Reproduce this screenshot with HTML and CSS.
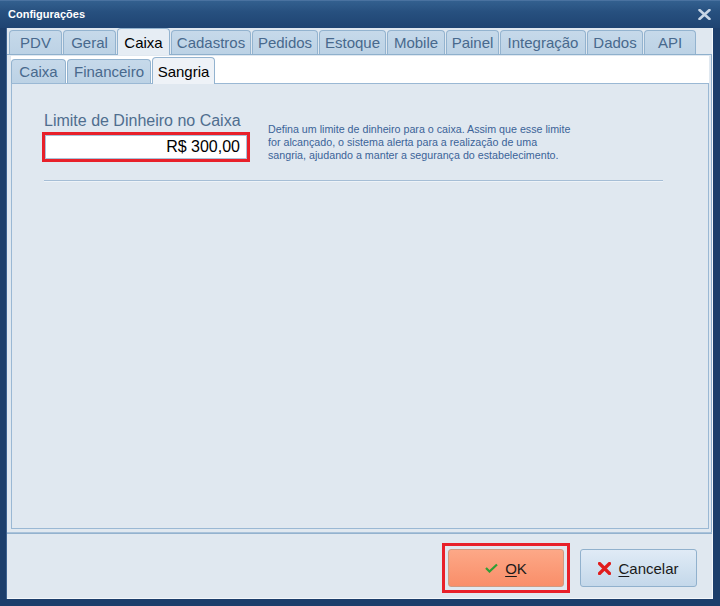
FILE: index.html
```html
<!DOCTYPE html>
<html lang="pt-BR">
<head>
<meta charset="utf-8">
<title>Configurações</title>
<link rel="stylesheet" href="styles.css">
</head>
<body>
<div class="window">
  <div class="titlebar">
    <span class="title">Configurações</span>
    <svg class="close" width="13" height="11" viewBox="0 0 13 11"><path d="M1.5 1 L11.5 10 M11.5 1 L1.5 10" stroke="#c8d6e6" stroke-width="2.6" stroke-linecap="round"/></svg>
  </div>
  <div class="client">
    <div class="tabstrip main">
      <div class="tab">PDV</div>
      <div class="tab">Geral</div>
      <div class="tab active">Caixa</div>
      <div class="tab">Cadastros</div>
      <div class="tab">Pedidos</div>
      <div class="tab">Estoque</div>
      <div class="tab">Mobile</div>
      <div class="tab">Painel</div>
      <div class="tab">Integração</div>
      <div class="tab">Dados</div>
      <div class="tab">API</div>
    </div>
    <div class="pane">
      <div class="tabstrip sub">
        <div class="tab">Caixa</div>
        <div class="tab">Financeiro</div>
        <div class="tab active">Sangria</div>
      </div>
      <div class="subpane">
        <div class="setting">
          <div class="field">
            <div class="label">Limite de Dinheiro no Caixa</div>
            <div class="input">R$ 300,00</div>
          </div>
          <p class="desc">Defina um limite de dinheiro para o caixa. Assim que esse limite<br>for alcançado, o sistema alerta para a realização de uma<br>sangria, ajudando a manter a segurança do estabelecimento.</p>
        </div>
        <div class="sep"></div>
      </div>
    </div>
    <div class="footer">
      <div class="focus-ring">
        <button class="btn ok" type="button">
          <svg class="ico" width="13" height="10" viewBox="0 0 13 10"><path d="M1 5 L4.5 8.5 L12 1.5" fill="none" stroke="#2f9e35" stroke-width="2.2"/></svg>
          <span><u>O</u>K</span>
        </button>
      </div>
      <button class="btn cancel" type="button">
        <svg class="ico" width="13" height="13" viewBox="0 0 13 13"><path d="M1.5 1.5 L11.5 11.5 M11.5 1.5 L1.5 11.5" stroke="#e01c1c" stroke-width="3.2" stroke-linecap="round"/></svg>
        <span><u>C</u>ancelar</span>
      </button>
    </div>
  </div>
</div>
</body>
</html>
```

FILE: styles.css
```css
* { box-sizing: border-box; }
html, body { margin: 0; padding: 0; }
body {
  width: 720px;
  height: 606px;
  overflow: hidden;
  font-family: "Liberation Sans", Arial, sans-serif;
}
.window {
  width: 720px;
  height: 606px;
  background: #1c3e6b;
  display: flex;
  flex-direction: column;
}
.titlebar {
  height: 28px;
  flex: none;
  display: flex;
  align-items: center;
  justify-content: space-between;
  padding: 0 9px 1px 8px;
  background: linear-gradient(#33608f, #27507f 40%, #1f4472);
  border-top: 1px solid #4a72a0;
}
.title {
  color: #ffffff;
  font-weight: bold;
  font-size: 11px;
}
.close { display: block; margin-top: 1px; }
.client {
  flex: 1;
  margin: 0 7px 7px 7px;
  background: #e0e8f0;
  border-right: 1px solid #f4f7fa;
  border-bottom: 1px solid #f4f7fa;
  box-shadow: -1px 0 0 #3d6290;
  display: flex;
  flex-direction: column;
}
.tabstrip {
  display: flex;
  align-items: flex-end;
  flex: none;
}
.tabstrip.main {
  height: 26px;
  padding-left: 2px;
}
.tab {
  height: 24px;
  padding: 0 4px;
  margin-right: 1px;
  display: flex;
  align-items: center;
  justify-content: center;
  font-size: 15px;
  color: #48698d;
  background: linear-gradient(#c6d9ea, #bcd2e5);
  border: 1px solid #93b3cf;
  border-bottom: none;
  border-radius: 4px 4px 0 0;
  white-space: nowrap;
}
.main .tab:nth-child(1),
.main .tab:nth-child(2),
.main .tab:nth-child(3),
.main .tab:nth-child(8) { width: 53px; }
.main .tab:nth-child(4) { width: 80px; }
.main .tab:nth-child(5) { width: 66px; }
.main .tab:nth-child(6) { width: 67px; }
.main .tab:nth-child(7) { width: 58px; }
.main .tab:nth-child(9) { width: 86px; }
.main .tab:nth-child(10) { width: 56px; }
.main .tab:nth-child(11) { width: 52px; }
.tab.active {
  color: #000000;
  background: #e6edf4;
  position: relative;
  margin-bottom: -1px;
  height: 27px;
  z-index: 1;
}
.pane {
  height: 479px;
  flex: none;
  border-top: 1px solid #8fb0cc;
  border-right: 1px solid #8fb0cc;
  border-bottom: 1px solid #a9c2da;
  padding: 1px 2px 3px 4px;
  display: flex;
  flex-direction: column;
}
.tabstrip.sub {
  height: 27px;
  background: #ffffff;
}
.sub .tab:nth-child(1) { width: 55px; }
.sub .tab:nth-child(2) { width: 84px; }
.sub .tab:nth-child(3) { width: 63px; }
.tabstrip.sub .tab.active {
  background: #eef2f7;
  height: 27px;
}
.subpane {
  flex: 1;
  background: #e0e8f0;
  border: 1px solid #9ab8d4;
  padding: 28px 0 0 32px;
}
.setting {
  display: flex;
  align-items: flex-start;
}
.field { width: 203px; flex: none; }
.label {
  font-size: 16px;
  line-height: 18px;
  color: #4f6e8f;
  white-space: nowrap;
}
.input {
  margin: 5px 0 0 1px;
  width: 202px;
  height: 24px;
  background: #ffffff;
  border: 1px solid #a9c2da;
  outline: 3px solid #e8202a;
  font-size: 16px;
  line-height: 22px;
  color: #000000;
  text-align: right;
  padding-right: 6px;
}
.desc {
  margin: 11px 0 0 21px;
  font-size: 10.7px;
  line-height: 13px;
  color: #3b6398;
  white-space: nowrap;
}
.sep {
  margin-top: 18px;
  width: 619px;
  height: 2px;
  border-top: 1px solid #a6bed6;
  border-bottom: 1px solid #eef3f8;
}
.footer {
  flex: 1;
  border-top: 1px solid #93b2ce;
  display: flex;
  justify-content: flex-end;
  align-items: center;
  align-self: stretch;
  padding: 9px 15px 0 0;
  align-items: flex-start;
  gap: 10px;
}
.focus-ring {
  border: 3px solid #e8202a;
  padding: 3px;
}
.btn {
  height: 38px;
  display: flex;
  align-items: center;
  justify-content: center;
  gap: 7px;
  font-family: "Liberation Sans", Arial, sans-serif;
  font-size: 15px;
  color: #1a1a1a;
  border-radius: 3px;
  padding: 0;
  margin: 0;
  cursor: default;
}
.btn u { text-decoration-thickness: 1px; text-underline-offset: 2px; }
.btn .ico { display: block; flex: none; }
.btn.ok {
  width: 116px;
  background: linear-gradient(#fda887, #f98e69);
  border: 1px solid #cf9a82;
}
.btn.cancel {
  width: 117px;
  margin-top: 6px;
  background: linear-gradient(#e0ebf6, #c4d8ea);
  border: 1px solid #91b1cd;
}
```
